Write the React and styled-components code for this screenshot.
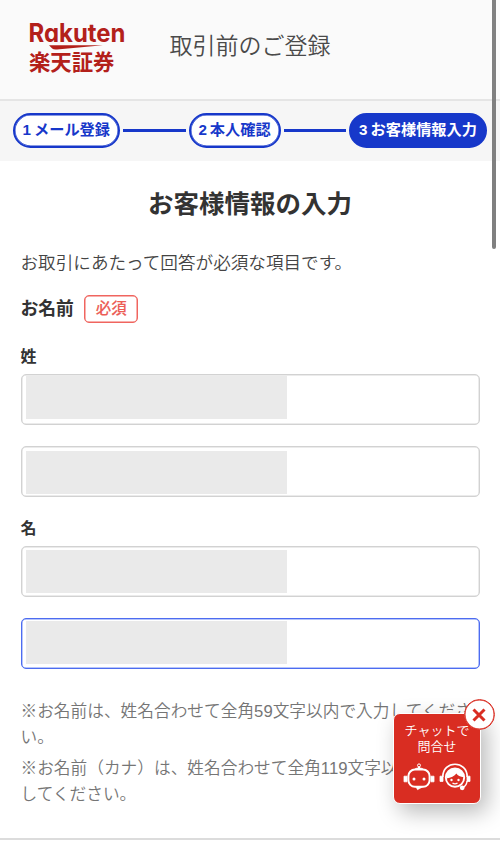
import React from 'react';
import styled, { createGlobalStyle } from 'styled-components';

const steps = [
    { number: 1, label: 'メール登録', width: 107.5 },
    { number: 2, label: '本人確認', width: 92 },
    { number: 3, label: 'お客様情報入力', width: 138, active: true },
];

const notes = [
    '※お名前は、姓名合わせて全角59文字以内で入力してください。',
    '※お名前（カナ）は、姓名合わせて全角119文字以内で入力してください。',
];

const Logo = () => (
    <LogoSvg viewBox="0 0 100 56" aria-label="Rakuten 楽天証券">
        <LogoText x="-0.5" y="22" textLength="97" lengthAdjust="spacingAndGlyphs">Rakuten</LogoText>
        <path d="M20 25.2H74L28 29.5Q24.5 29.8 23.2 28.6Z" />
        <LogoTextJa x="0" y="50.3" textLength="85.5" lengthAdjust="spacingAndGlyphs">楽天証券</LogoTextJa>
    </LogoSvg>
);

const RobotIcon = () => (
    <svg width="32" height="28" viewBox="0 0 32 28" fill="none" stroke="#fff">
        <path d="M16 3.5V6" strokeWidth="2" />
        <circle cx="16" cy="2.4" r="1.5" strokeWidth="1" />
        <path d="M12 6.2C13 4.6 19 4.6 20 6.2" fill="#fff" />
        <rect x="5.4" y="6.6" width="21.2" height="17.2" rx="6.5" strokeWidth="2" />
        <path d="M1 13.2h3v5.6H1zM28 13.2h3v5.6h-3z" fill="#fff" strokeWidth=".8" />
        <path d="M13 24h6.5l-5 2.7z" fill="#fff" strokeWidth=".6" />
        <circle cx="11" cy="16" r="1.5" fill="#fff" stroke="none" />
        <circle cx="21" cy="16" r="1.5" fill="#fff" stroke="none" />
    </svg>
);

const OperatorIcon = () => (
    <svg width="32" height="28" viewBox="0 0 32 28" fill="none" stroke="#fff">
        <path d="M3.8 14C3.8 -3 28.2 -3 28.2 14" strokeWidth="1.7" />
        <circle cx="16" cy="14.6" r="9.2" strokeWidth="1.9" />
        <path d="M7.4 15.5C6.5 2.5 23.5 2 25 14.3C21 14 18.8 12.5 17.4 10.5C15.5 13 12 14.8 7.4 15.5Z" fill="#fff" stroke="none" />
        <path d="M1 13.2h3v5.2H1zM28 13.2h3v5.2h-3z" fill="#fff" strokeWidth=".8" />
        <path d="M28 18C28 21.5 26 23.5 23.5 25" strokeWidth="1.4" />
        <circle cx="23.2" cy="24.8" r="2.4" fill="#fff" stroke="none" />
        <circle cx="12.5" cy="17" r="1.2" fill="#fff" stroke="none" />
        <circle cx="19.5" cy="17" r="1.2" fill="#fff" stroke="none" />
        <path d="M13.5 20Q16 21.8 18.5 20" strokeWidth="1.3" />
    </svg>
);

const Field = ({ focused, maskTop }) => (
    <InputBox $focused={focused}>
        <Mask $top={maskTop} />
    </InputBox>
);

const App = () => {
    return (<Page>
        <GlobalStyle />
        <Header>
            <Logo />
            <HeaderTitle>取引前のご登録</HeaderTitle>
        </Header>
        <StepBar>
            {steps.map((step, index) => (
                <React.Fragment key={step.number}>
                    {index > 0 && <Connector />}
                    <Step $width={step.width} $active={step.active}>
                        <StepNumber>{step.number}</StepNumber>{step.label}
                    </Step>
                </React.Fragment>
            ))}
        </StepBar>
        <Content>
            <Heading>お客様情報の入力</Heading>
            <Lead>お取引にあたって回答が必須な項目です。</Lead>
            <NameRow>
                <NameLabel>お名前</NameLabel>
                <Required>必須</Required>
            </NameRow>
            <FieldLabel>姓</FieldLabel>
            <FieldGroup>
                <Field maskTop={1} />
                <Field maskTop={4} />
            </FieldGroup>
            <FieldLabel>名</FieldLabel>
            <FieldGroup>
                <Field maskTop={3} />
                <Field maskTop={2} focused />
            </FieldGroup>
            <Notes>
                {notes.map((note) => <Note key={note}>{note}</Note>)}
            </Notes>
        </Content>
        <ChatWidget>
            <ChatText>チャットで<br />問合せ</ChatText>
            <ChatIcons>
                <RobotIcon />
                <OperatorIcon />
            </ChatIcons>
            <CloseButton aria-label="閉じる">
                <svg width="14" height="14" viewBox="0 0 14 14" stroke="#d92d22" strokeWidth="3">
                    <path d="M1.5 1.5l11 11M12.5 1.5l-11 11" />
                </svg>
            </CloseButton>
        </ChatWidget>
        <ScrollThumb />
    </Page>);
}

export default App;

const GlobalStyle = createGlobalStyle`
    * {
        box-sizing: border-box;
    }
    body {
        margin: 0;
        background: #fff;
        font-family: "Liberation Sans", "Noto Sans CJK JP", sans-serif;
        color: #333;
        overflow: hidden;
    }
`

const Page = styled.div`
    position: relative;
    width: 500px;
    height: 841px;
    overflow: hidden;
    background: #fff;
`

const Header = styled.header`
    display: flex;
    align-items: flex-start;
    height: 101px;
    padding: 20px 0 0 29px;
    background: #fafafa;
    border-bottom: 2px solid #e5e5e5;
`

const LogoSvg = styled.svg`
    width: 100px;
    height: 56px;
    fill: #b3201a;
    overflow: visible;
`

const LogoText = styled.text`
    font: 700 25.5px Inter, sans-serif;
    font-feature-settings: "cv11" 1;
`

const LogoTextJa = styled.text`
    font: 700 21.5px "Noto Sans CJK JP", sans-serif;
`

const HeaderTitle = styled.div`
    margin: 9px 0 0 40.5px;
    font-size: 23px;
    line-height: 34px;
    font-weight: 350;
    color: #4a4a4a;
`

const StepBar = styled.nav`
    display: flex;
    align-items: center;
    gap: 3px;
    height: 60px;
    padding: 0 0 1px 12.5px;
    background: #f6f6f6;
`

const Step = styled.div`
    display: flex;
    align-items: center;
    justify-content: center;
    flex: none;
    width: ${(props) => props.$width}px;
    height: 35px;
    padding-bottom: 2px;
    border: 2px solid #1738ca;
    border-radius: 18px;
    box-shadow: inset 0 0 0 0.5px #1738ca;
    background: ${(props) => (props.$active ? '#1738ca' : '#fff')};
    color: ${(props) => (props.$active ? '#fff' : '#1738ca')};
    font-size: 15.2px;
    line-height: 22px;
    font-weight: 700;
    white-space: nowrap;
`

const StepNumber = styled.span`
    margin-right: 3px;
`

const Connector = styled.div`
    flex: none;
    width: 62.5px;
    height: 3px;
    background: #1738ca;
`

const Content = styled.main`
    height: 679px;
    padding: 23px 20.5px 0;
    border-bottom: 2px solid #dcdcdc;
`

const Heading = styled.h1`
    margin: 0;
    font-size: 25.5px;
    line-height: 40px;
    font-weight: 700;
    text-align: center;
`

const Lead = styled.p`
    margin: 25px 0 0;
    font-size: 17.6px;
    line-height: 28px;
    font-weight: 350;
    color: #444;
`

const NameRow = styled.div`
    display: flex;
    align-items: flex-start;
    gap: 10.5px;
    height: 30px;
    margin-top: 17px;
`

const NameLabel = styled.span`
    font-size: 17.8px;
    line-height: 30px;
    font-weight: 700;
`

const Required = styled.span`
    width: 54px;
    height: 28px;
    margin-top: 1px;
    border: 1px solid #f0655f;
    border-radius: 5px;
    box-shadow: inset 0 0 0 0.5px #f0655f;
    color: #ec5d56;
    -webkit-text-stroke: 0.1px #ec5d56;
    font-size: 15.5px;
    line-height: 26px;
    font-weight: 500;
    text-align: center;
`

const FieldLabel = styled.div`
    height: 24px;
    margin-top: 20.5px;
    font-size: 16px;
    line-height: 24px;
    font-weight: 700;
`

const FieldGroup = styled.div`
    display: flex;
    flex-direction: column;
    gap: 21px;
    margin-top: 5px;
`

const InputBox = styled.div`
    height: 51px;
    border: 1px solid ${(props) => (props.$focused ? '#4d6cf0' : '#d2d2d2')};
    border-radius: 5px;
    box-shadow: inset 0 0 0 0.5px ${(props) => (props.$focused ? '#6f8cf8' : '#d8d8d8')};
`

const Mask = styled.div`
    width: 261px;
    height: 43px;
    margin: ${(props) => props.$top}px 0 0 4px;
    background: #eaeaea;
`

const Notes = styled.div`
    display: flex;
    flex-direction: column;
    gap: 5px;
    margin-top: 29.5px;
`

const Note = styled.p`
    margin: 0;
    font-size: 16.7px;
    line-height: 26px;
    font-weight: 350;
    color: #757575;
`

const ChatWidget = styled.aside`
    position: absolute;
    left: 393px;
    top: 713px;
    width: 88px;
    height: 91px;
    padding-top: 9px;
    border: 1px solid #fff;
    border-radius: 7px;
    background: #d92d22;
    box-shadow: 6px 8px 22px rgba(0, 0, 0, 0.28);
    color: #fff;
`

const ChatText = styled.div`
    font-size: 13px;
    line-height: 15.5px;
    font-weight: 350;
    text-align: center;
`

const ChatIcons = styled.div`
    display: flex;
    justify-content: center;
    gap: 4px;
    margin-top: 9px;
`

const CloseButton = styled.button`
    position: absolute;
    right: -14.5px;
    top: -15px;
    display: flex;
    align-items: center;
    justify-content: center;
    width: 31px;
    height: 31px;
    padding: 0;
    border: 1px solid #d92d22;
    border-radius: 50%;
    box-shadow: inset 0 0 0 0.5px #d92d22;
    background: #fff;
`

const ScrollThumb = styled.div`
    position: absolute;
    left: 492px;
    top: -6px;
    width: 4px;
    height: 255px;
    border-radius: 2px;
    background: #808080;
`
